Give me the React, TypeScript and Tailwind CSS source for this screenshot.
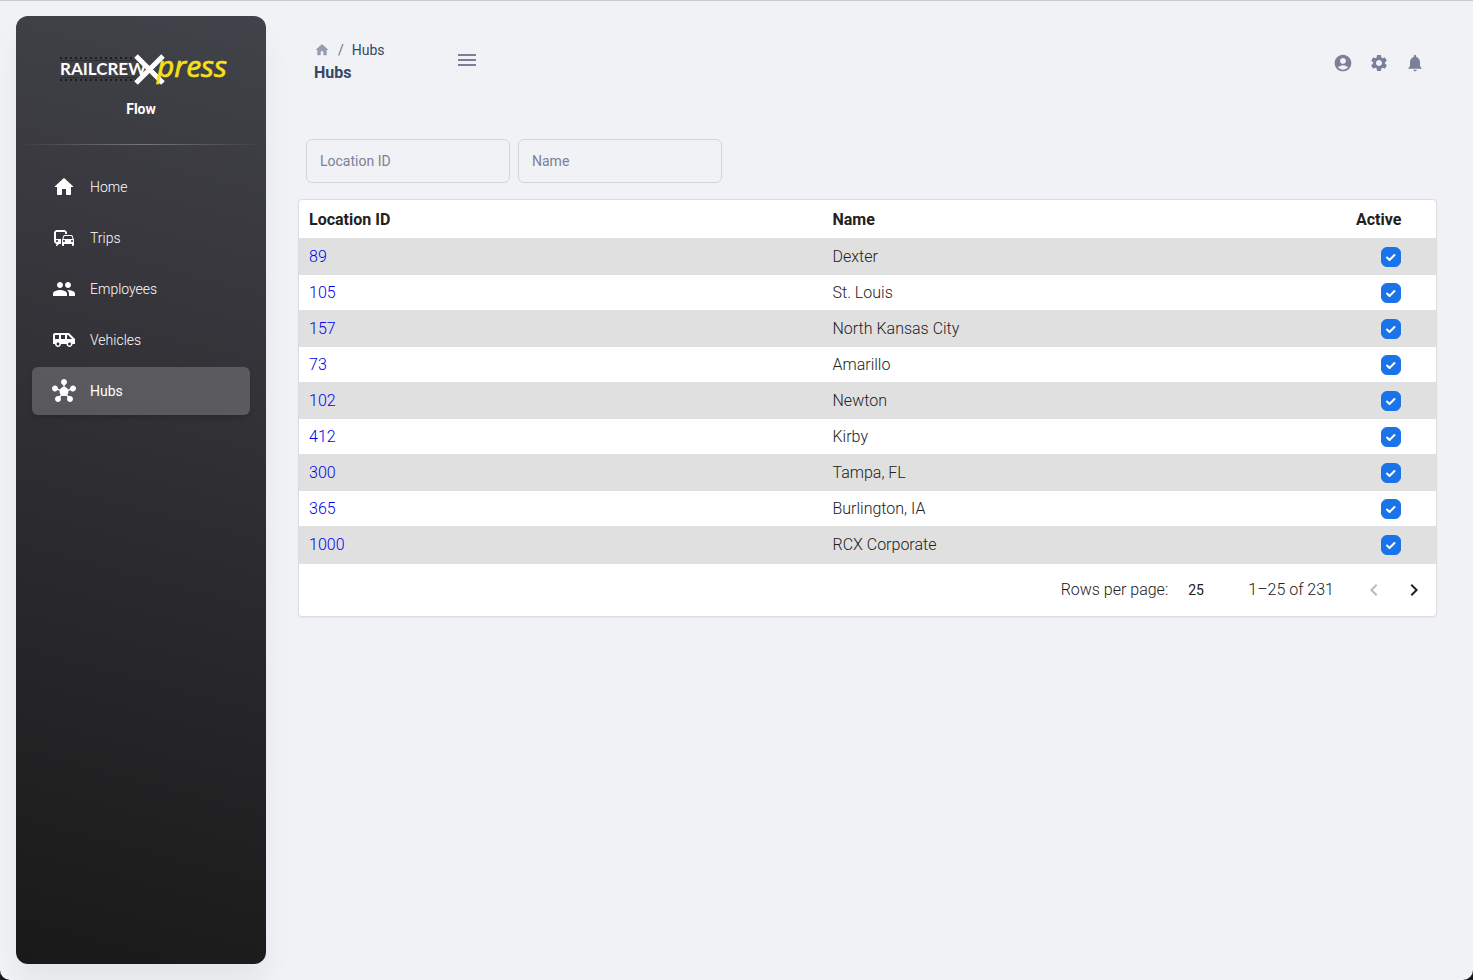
import { useState } from "react";
import {
  MdAccountCircle,
  MdAirportShuttle,
  MdChevronLeft,
  MdChevronRight,
  MdCommute,
  MdHub,
  MdMenu,
  MdNotifications,
  MdPeople,
  MdSettings,
} from "react-icons/md";

const HomeIcon = ({ size = 24 }: { size?: number }) => (
  <svg width={size} height={size} viewBox="0 0 24 24" fill="currentColor" aria-hidden="true">
    <path d="M10 19v-5h4v5c0 .55.45 1 1 1h3c.55 0 1-.45 1-1v-7h1.7c.46 0 .68-.57.33-.87L12.67 3.6c-.38-.34-.96-.34-1.34 0l-8.36 7.53c-.34.3-.13.87.33.87H5v7c0 .55.45 1 1 1h3c.55 0 1-.45 1-1z" />
  </svg>
);

const Logo = () => (
  <svg width="176" height="48" viewBox="-5 -8 176 48" className="overflow-visible" role="img" aria-label="RailcrewXpress">
    {/* Track */}
    <g stroke="#1c1c20" fill="none">
      <path d="M0 6H76M0 28H76" strokeWidth="2" strokeDasharray="2 3" />
      <path d="M0 8.5H76M0 25.5H76" strokeWidth="1" opacity="0.5" />
    </g>
    <text x="0" y="23" fill="#fff" fontFamily="Lato, sans-serif" fontWeight="700" fontSize="17">
      RAILCREW
    </text>
    {/* Crossing */}
    <g stroke="#fff" strokeWidth="5">
      <path d="M76 4L103 31M103 4L76 31" />
    </g>
    <text
      x="97"
      y="25"
      fill="#f7e017"
      stroke="#f7e017"
      strokeWidth="0.7"
      fontFamily="'Open Sans', sans-serif"
      fontStyle="italic"
      fontSize="30"
    >
      press
    </text>
  </svg>
);

const links = [
  { name: "Home", icon: <HomeIcon /> },
  { name: "Trips", icon: <MdCommute size={24} /> },
  { name: "Employees", icon: <MdPeople size={24} /> },
  { name: "Vehicles", icon: <MdAirportShuttle size={24} /> },
  { name: "Hubs", icon: <MdHub size={24} />, active: true },
];

const initialHubs = [
  { id: 89, name: "Dexter", active: true },
  { id: 105, name: "St. Louis", active: true },
  { id: 157, name: "North Kansas City", active: true },
  { id: 73, name: "Amarillo", active: true },
  { id: 102, name: "Newton", active: true },
  { id: 412, name: "Kirby", active: true },
  { id: 300, name: "Tampa, FL", active: true },
  { id: 365, name: "Burlington, IA", active: true },
  { id: 1000, name: "RCX Corporate", active: true },
];

export default function App() {
  const [hubs, setHubs] = useState(initialHubs);
  const [locationId, setLocationId] = useState("");
  const [name, setName] = useState("");

  const toggle = (id: number) => {
    setHubs(hubs.map((h) => (h.id === id ? { ...h, active: !h.active } : h)));
  };

  const rows = hubs.filter(
    (h) => String(h.id).includes(locationId) && h.name.toLowerCase().includes(name.toLowerCase())
  );

  return (
    <div className="bg-[#16181d] font-[Roboto,sans-serif]">
      <div className="flex min-h-screen items-start rounded-b-[10px] border-t border-[#c9cacf] bg-[#f0f2f5] pl-4">

        {/* Sidebar */}
        <aside className="sticky top-4 mt-[15px] mb-4 flex h-[calc(100vh-32px)] w-[250px] shrink-0 flex-col rounded-xl bg-[linear-gradient(195deg,#42424a,#191919)] text-white shadow-[0_20px_27px_0_rgba(0,0,0,0.05)]">
          <div className="flex flex-col items-center pt-7">
            <a href="#home" className="ml-1">
              <Logo />
            </a>
            <h6 className="mt-[5px] text-sm leading-6 font-bold">Flow</h6>
          </div>
          <div className="mt-[23px] h-px bg-linear-to-r from-white/0 via-white/30 to-white/0" />
          <nav className="mt-[18px] flex flex-col gap-[3px] px-4">
            {links.map((link) => (
              <a
                key={link.name}
                href={`#${link.name.toLowerCase()}`}
                className={
                  link.active
                    ? "flex h-12 items-center gap-[14px] rounded-md bg-white/20 px-5 text-sm shadow-md"
                    : "flex h-12 items-center gap-[14px] rounded-md px-5 text-sm font-light"
                }
              >
                {link.icon}
                <span>{link.name}</span>
              </a>
            ))}
          </nav>
        </aside>

        <main className="min-w-0 flex-1 pt-[38px] pr-9 pb-6 pl-8">

          {/* Navbar */}
          <header className="flex items-start pr-3 pl-4 text-[#7b809a]">
            <div className="w-[141px]">
              <div className="flex h-[22px] items-center text-sm">
                <a href="#home" aria-label="Home" className="text-[#959cb2]">
                  <HomeIcon size={16} />
                </a>
                <span className="mx-2 text-[#6c757d]">/</span>
                <span className="text-[#344767]">Hubs</span>
              </div>
              <h1 className="text-base leading-6 font-bold text-[#344767]">Hubs</h1>
            </div>
            <button aria-label="Toggle menu" className="mt-[9px]">
              <MdMenu size={24} />
            </button>
            <div className="mt-[14px] ml-auto flex gap-4">
              <button aria-label="Account">
                <MdAccountCircle size={20} />
              </button>
              <button aria-label="Settings">
                <MdSettings size={20} />
              </button>
              <button aria-label="Notifications">
                <MdNotifications size={20} />
              </button>
            </div>
          </header>

          {/* Filters */}
          <div className="mt-[54px] flex gap-2 px-2">
            <input
              aria-label="Location ID"
              placeholder="Location ID"
              value={locationId}
              onChange={(e) => setLocationId(e.target.value)}
              className="h-11 w-[204px] rounded-md border border-[#d2d6da] px-[13px] text-sm text-[#495057] outline-none placeholder:text-[#7b809a]"
            />
            <input
              aria-label="Name"
              placeholder="Name"
              value={name}
              onChange={(e) => setName(e.target.value)}
              className="h-11 w-[204px] rounded-md border border-[#d2d6da] px-[13px] text-sm text-[#495057] outline-none placeholder:text-[#7b809a]"
            />
          </div>

          {/* Table */}
          <section className="mt-4 overflow-hidden rounded border border-[#dcdde0] bg-white text-base text-[#212121] shadow-xs">
            <table className="w-full table-fixed border-collapse text-left">
              <thead>
                <tr className="h-[38px]">
                  <th className="px-[10px] pt-0.5 font-bold">Location ID</th>
                  <th className="px-[10px] pt-0.5 font-bold">Name</th>
                  <th className="w-[90px] px-[10px] pt-0.5 font-bold">Active</th>
                </tr>
              </thead>
              <tbody className="font-light">
                {rows.map((hub) => (
                  <tr key={hub.id} className="odd:h-[37px] odd:bg-[#e0e0e0] even:h-[35px]">
                    <td className="px-[10px] pt-px">
                      <a href={`#hub-${hub.id}`} className="text-[#0000ee]">{hub.id}</a>
                    </td>
                    <td className="px-[10px] pt-px">{hub.name}</td>
                    <td className="pt-px">
                      <label className="mx-auto grid size-5 cursor-pointer place-items-center">
                        <input
                          type="checkbox"
                          aria-label={`${hub.name} active`}
                          checked={hub.active}
                          onChange={() => toggle(hub.id)}
                          className="col-start-1 row-start-1 size-5 appearance-none rounded-md border border-[#c4c9d0] bg-white checked:border-[#1a73e8] checked:bg-[#1a73e8]"
                        />
                        <svg viewBox="0 0 20 20" className="pointer-events-none col-start-1 row-start-1 size-5" aria-hidden="true">
                          <path d="M6 10.5l2.5 2.5 5-5" fill="none" stroke="#fff" strokeWidth="2" strokeLinecap="round" strokeLinejoin="round" />
                        </svg>
                      </label>
                    </td>
                  </tr>
                ))}
              </tbody>
            </table>

            {/* Pagination */}
            <div className="flex h-[53px] items-center justify-end border-t border-[#e0e0e0] pr-[2px] font-light">
              <label htmlFor="rows-per-page">Rows per page:</label>
              <select
                id="rows-per-page"
                defaultValue="25"
                className="ml-5 w-10 appearance-none text-sm font-normal outline-none"
              >
                <option>10</option>
                <option>25</option>
                <option>50</option>
              </select>
              <span className="mr-5 ml-5">1–25 of 231</span>
              <button disabled aria-label="Previous page" className="p-2 opacity-30">
                <MdChevronLeft size={24} />
              </button>
              <button aria-label="Next page" className="p-2">
                <MdChevronRight size={24} />
              </button>
            </div>
          </section>
        </main>
      </div>
    </div>
  );
}
